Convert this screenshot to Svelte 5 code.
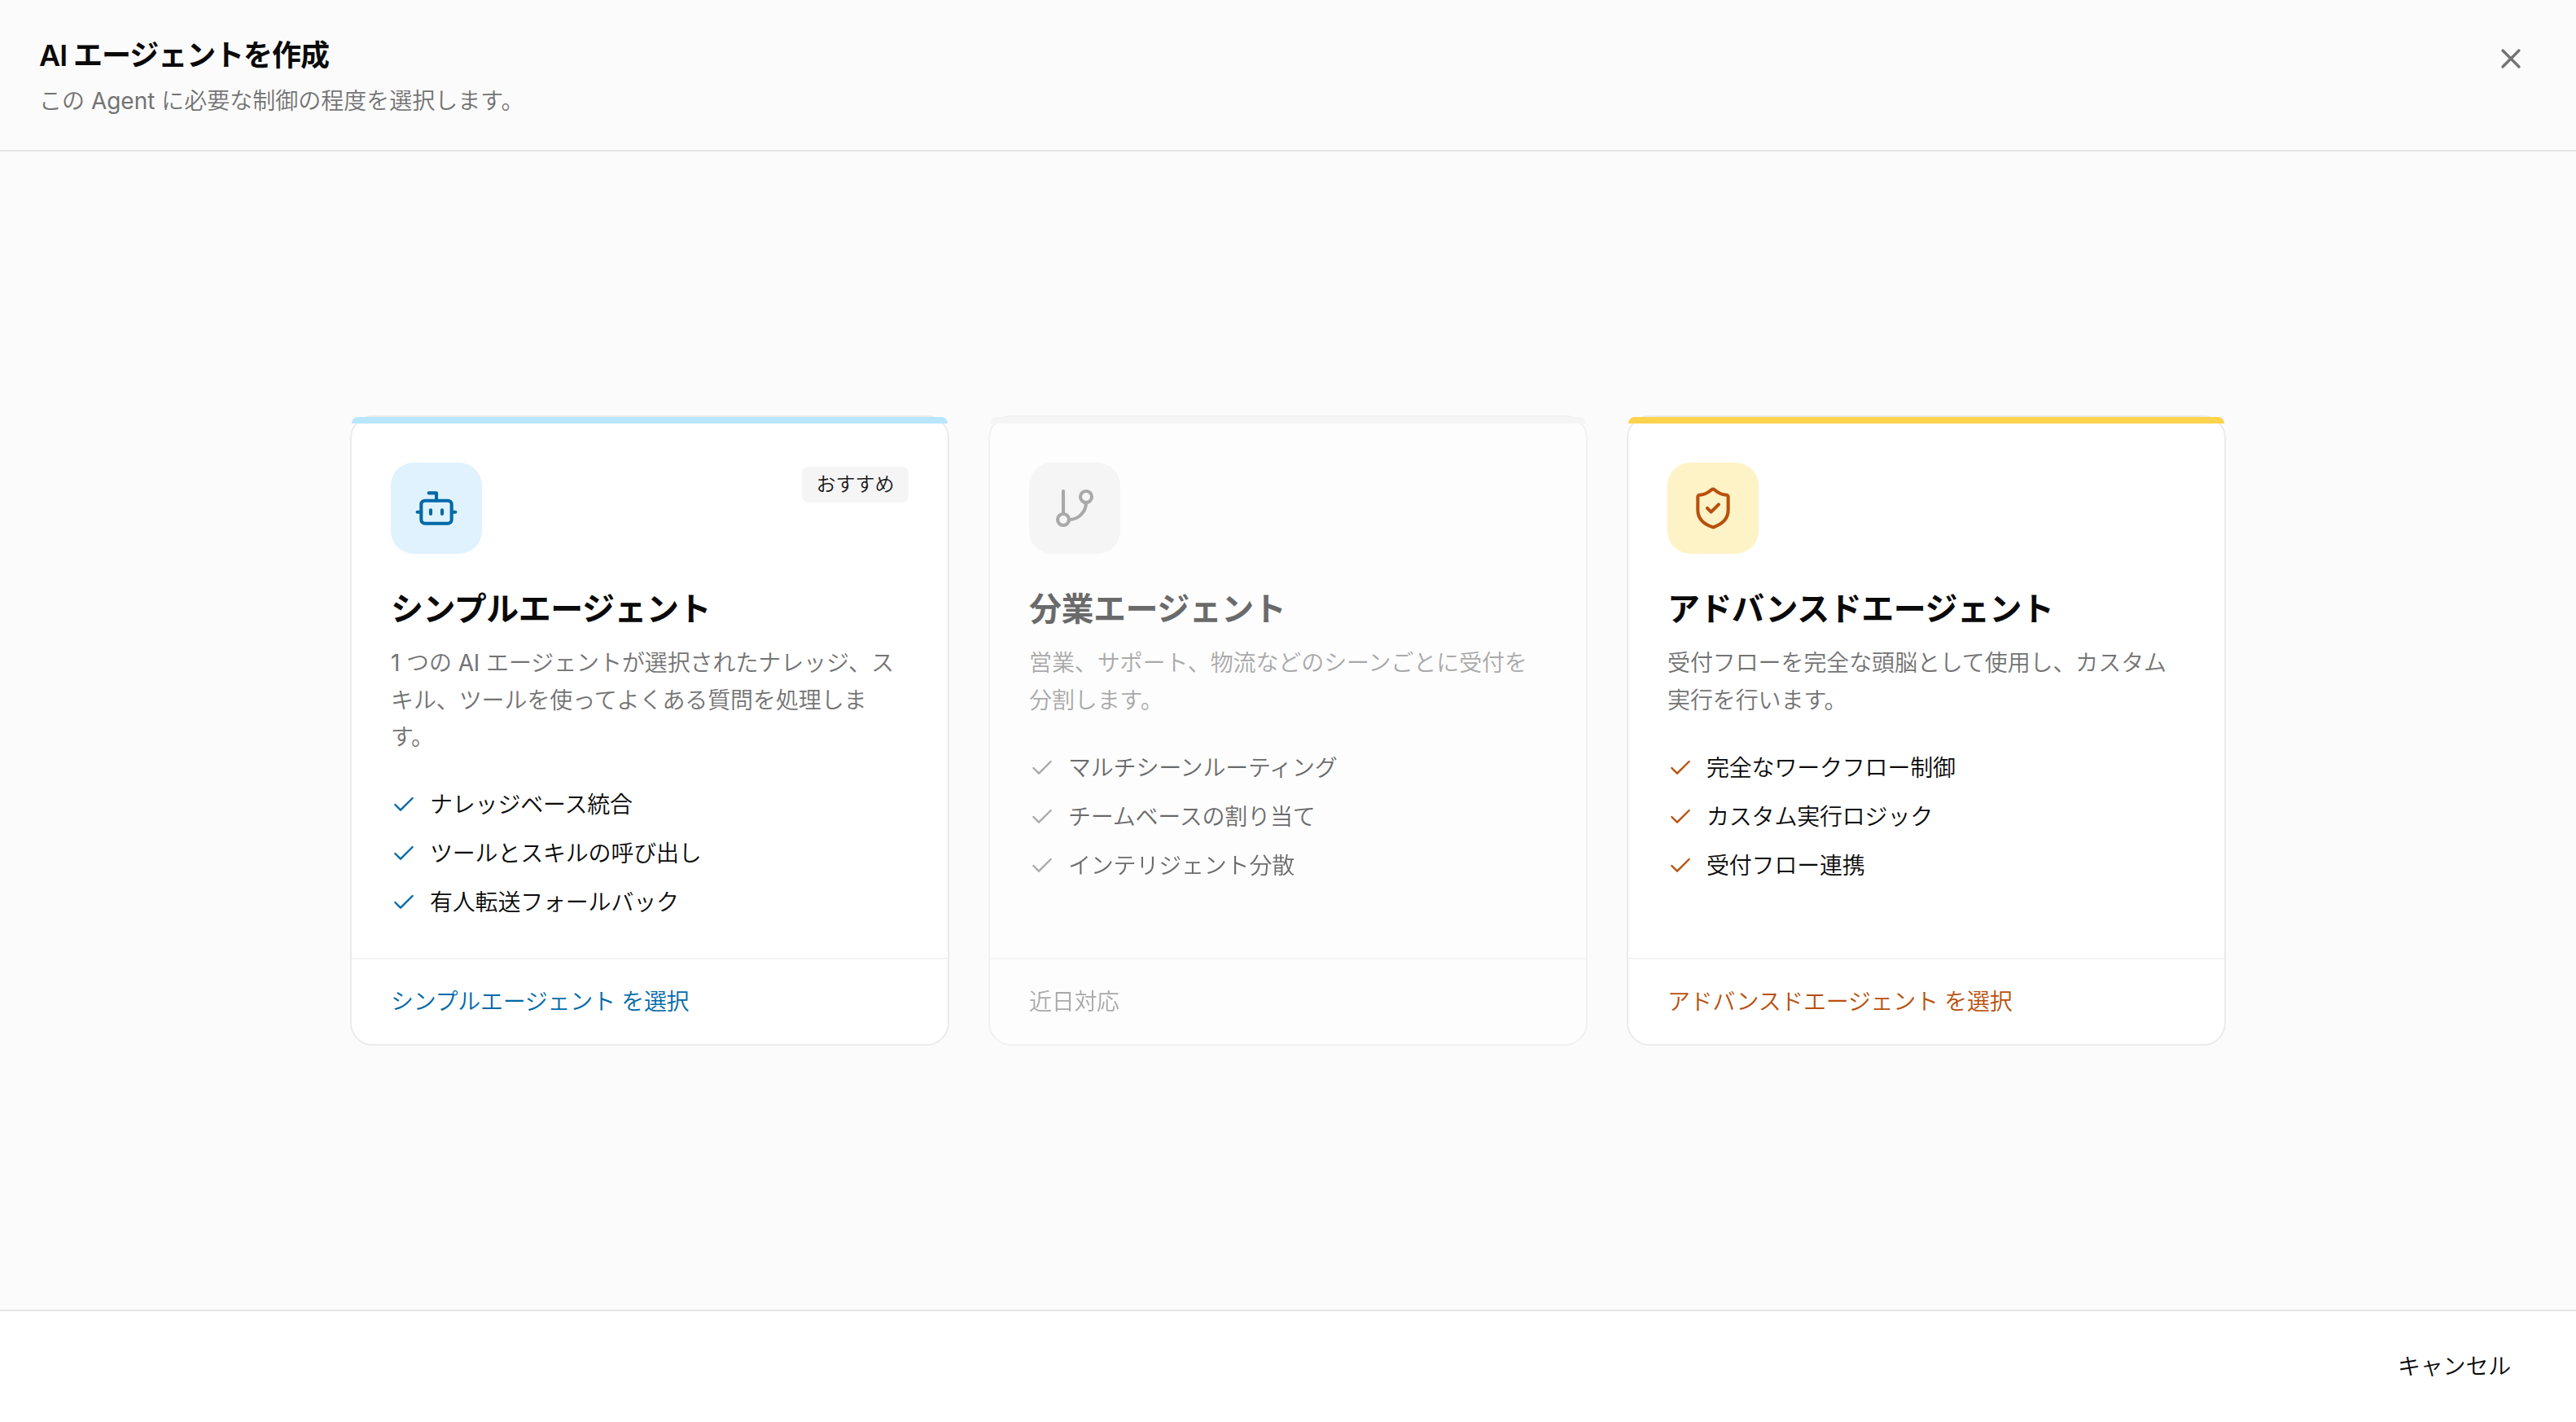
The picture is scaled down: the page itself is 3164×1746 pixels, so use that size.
<script>
	let open = true;
	let selected = null;

	const agentTypes = [
		{
			id: 'simple',
			tone: 'sky',
			icon: 'bot',
			badge: 'おすすめ',
			title: 'シンプルエージェント',
			desc: '1 つの AI エージェントが選択されたナレッジ、スキル、ツールを使ってよくある質問を処理します。',
			features: ['ナレッジベース統合', 'ツールとスキルの呼び出し', '有人転送フォールバック'],
			action: 'シンプルエージェント を選択'
		},
		{
			id: 'division',
			tone: 'muted',
			icon: 'branch',
			disabled: true,
			title: '分業エージェント',
			desc: '営業、サポート、物流などのシーンごとに受付を分割します。',
			features: ['マルチシーンルーティング', 'チームベースの割り当て', 'インテリジェント分散'],
			action: '近日対応'
		},
		{
			id: 'advanced',
			tone: 'amber',
			icon: 'shield',
			title: 'アドバンスドエージェント',
			desc: '受付フローを完全な頭脳として使用し、カスタム実行を行います。',
			features: ['完全なワークフロー制御', 'カスタム実行ロジック', '受付フロー連携'],
			action: 'アドバンスドエージェント を選択'
		}
	];

	function selectType(id) {
		selected = id;
	}

	function close() {
		open = false;
	}
</script>

{#if open}
	<div class="dialog" lang="ja">
		<header class="header">
			<div class="heading">
				<h1>AI エージェントを作成</h1>
				<p>この Agent に必要な制御の程度を選択します。</p>
			</div>
			<button class="close" aria-label="閉じる" on:click={close}>
				<svg viewBox="0 0 24 24"><path d="M18 6 6 18" /><path d="m6 6 12 12" /></svg>
			</button>
		</header>

		<main class="content">
			<div class="cards">
				{#each agentTypes as type}
					<button
						class="card {type.tone}"
						disabled={type.disabled}
						aria-pressed={selected === type.id}
						on:click={() => selectType(type.id)}
					>
						<span class="bar"></span>
						<span class="cardBody">
							<span class="top">
								<span class="iconBox">
									<svg viewBox="0 0 24 24">
										{#if type.icon === 'bot'}
											<path d="M12 8V4H8" />
											<rect width="16" height="12" x="4" y="8" rx="2" />
											<path d="M2 14h2" />
											<path d="M20 14h2" />
											<path d="M15 13v2" />
											<path d="M9 13v2" />
										{:else if type.icon === 'branch'}
											<path d="M6 3v12" />
											<circle cx="18" cy="6" r="3" />
											<circle cx="6" cy="18" r="3" />
											<path d="M18 9a9 9 0 0 1-9 9" />
										{:else}
											<path
												d="M20 13c0 5-3.5 7.5-7.66 8.95a1 1 0 0 1-.67-.01C7.5 20.5 4 18 4 13V6a1 1 0 0 1 1-1c2 0 4.5-1.2 6.24-2.72a1.17 1.17 0 0 1 1.52 0C14.51 3.81 17 5 19 5a1 1 0 0 1 1 1z"
											/>
											<path d="m9 12 2 2 4-4" />
										{/if}
									</svg>
								</span>
								{#if type.badge}
									<span class="badge">{type.badge}</span>
								{/if}
							</span>
							<span class="title">{type.title}</span>
							<span class="desc">{type.desc}</span>
							<span class="features">
								{#each type.features as feature}
									<span class="feature">
										<svg viewBox="0 0 24 24"><path d="M20 6 9 17l-5-5" /></svg>
										{feature}
									</span>
								{/each}
							</span>
						</span>
						<span class="action">{type.action}</span>
					</button>
				{/each}
			</div>
		</main>

		<footer class="footer">
			<button class="cancel" on:click={close}>キャンセル</button>
		</footer>
	</div>
{/if}

<style>
	:global(body) {
		background-color: #fbfbfb;
	}

	.dialog {
		display: flex;
		flex-direction: column;
		height: 100vh;
		background-color: #fbfbfb;
		color: #0a0a0a;
		font-family: Inter, 'Noto Sans CJK JP DemiLight', 'Noto Sans CJK JP', sans-serif;
		font-size: 28px;
		line-height: 40px;
	}

	button {
		font: inherit;
		color: inherit;
		background: none;
		border: none;
		padding: 0;
		margin: 0;
		text-align: left;
		cursor: pointer;
	}

	svg {
		display: block;
		fill: none;
		stroke: currentColor;
		stroke-width: 2;
		stroke-linecap: round;
		stroke-linejoin: round;
	}

	/* Header */
	.header {
		display: flex;
		justify-content: space-between;
		align-items: flex-start;
		padding: 40px 48px;
		border-bottom: 2px solid #e5e5e5;
	}

	.heading {
		display: flex;
		flex-direction: column;
		gap: 8px;
	}

	h1 {
		margin: 0;
		font-family: Inter, 'Noto Sans CJK JP', sans-serif;
		font-size: 36px;
		font-weight: 600;
		line-height: 56px;
		letter-spacing: -1.05px;
	}

	.heading p {
		margin: 0;
		color: #737373;
	}

	.close {
		display: flex;
		align-items: center;
		justify-content: center;
		width: 64px;
		height: 64px;
		color: #737373;
	}

	.close svg {
		width: 40px;
		height: 40px;
	}

	/* Cards */
	.content {
		flex: 1;
		display: flex;
		align-items: center;
		justify-content: center;
	}

	.cards {
		display: grid;
		grid-template-columns: repeat(3, 1fr);
		gap: 48px;
		width: 2304px;
	}

	.card {
		display: flex;
		flex-direction: column;
		box-sizing: border-box;
		height: 774px;
		border: 2px solid #ebebeb;
		border-radius: 28px;
		background-color: #fff;
	}

	.card:disabled {
		opacity: 0.6;
		cursor: not-allowed;
	}

	.bar {
		height: 8px;
		border-radius: 8px 8px 0 0;
	}

	.cardBody {
		flex: 1;
		display: flex;
		flex-direction: column;
		padding: 48px;
	}

	.top {
		display: flex;
		justify-content: space-between;
		align-items: flex-start;
	}

	.iconBox {
		display: flex;
		align-items: center;
		justify-content: center;
		width: 112px;
		height: 112px;
		border-radius: 28px;
	}

	.iconBox svg {
		width: 56px;
		height: 56px;
		stroke-width: 1.75;
	}

	.badge {
		margin-top: 5px;
		padding: 6px 17.5px;
		border-radius: 8px;
		background-color: #f5f5f5;
		color: #171717;
		font-size: 24px;
		line-height: 32px;
	}

	.title {
		margin-top: 40px;
		font-family: Inter, 'Noto Sans CJK JP', sans-serif;
		font-size: 40px;
		font-weight: 600;
		line-height: 55px;
		letter-spacing: -0.5px;
	}

	.desc {
		margin-top: 17px;
		color: #737373;
		line-height: 45.5px;
		letter-spacing: -0.1px;
	}

	.features {
		display: flex;
		flex-direction: column;
		gap: 20px;
		margin-top: 39.5px;
		letter-spacing: -0.2px;
	}

	.feature {
		display: flex;
		align-items: center;
		gap: 16px;
	}

	.feature svg {
		width: 32px;
		height: 32px;
		stroke-width: 1.75;
	}

	.action {
		padding: 32px 48px;
		border-top: 2px solid #f2f2f2;
		letter-spacing: -0.3px;
	}

	/* Tones */
	.sky .bar {
		background-color: #b8e6fe;
	}

	.sky .iconBox {
		background-color: #dff2fe;
	}

	.sky svg,
	.sky .action {
		color: #0069a8;
	}

	.muted .bar,
	.muted .iconBox {
		background-color: #f2f2f2;
	}

	.muted svg,
	.muted .action {
		color: #737373;
	}

	.amber .bar {
		background-color: #fcd34d;
	}

	.amber .iconBox {
		background-color: #fef3c6;
	}

	.amber svg,
	.amber .action {
		color: #b8500c;
	}

	/* Footer */
	.footer {
		display: flex;
		justify-content: flex-end;
		align-items: center;
		height: 136px;
		padding: 0 48px;
		border-top: 2px solid #e5e5e5;
		background-color: #fff;
	}

	.cancel {
		padding: 12px 32px;
		letter-spacing: -0.2px;
	}
</style>
